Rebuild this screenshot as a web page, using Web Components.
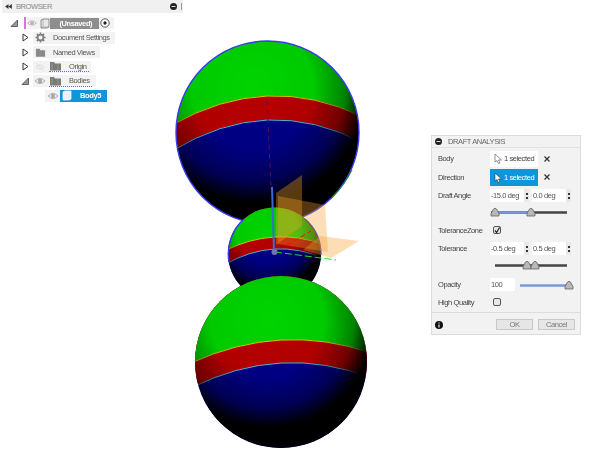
<!DOCTYPE html>
<html>
<head>
<meta charset="utf-8">
<title>Draft Analysis</title>
<style>
html, body { margin: 0; height: 100%; background: #fff; overflow: hidden; }
body { font-family: "Liberation Sans", Arial, sans-serif; }
</style>
</head>
<body>
<cad-app>
  <model-view></model-view>
  <browser-panel slot="browser">
    <tree-row arrow="open" indent="7" leadw="10" pink chipw="73">
      <svg slot="lead" width="10" height="10" viewBox="0 0 14 14"><circle cx="7" cy="7" r="2.600" fill="#b5b5b5"/><path d="M1 7q6-6 12 0q-6 6-12 0z" fill="none" stroke="#b5b5b5" stroke-width="1.300"/></svg>
      <doc-chip>(Unsaved)</doc-chip>
      <svg slot="tail" width="10" height="10" viewBox="0 0 11 11"><circle cx="5.500" cy="5.500" r="4.600" fill="#fff" stroke="#444"/><circle cx="5.500" cy="5.500" r="1.800" fill="#222"/></svg>
    </tree-row>
    <tree-row arrow="closed" indent="18" chipw="82">
      <svg slot="lead" width="11" height="11" viewBox="0 0 12 12"><circle cx="6" cy="6" r="3.200" fill="none" stroke="#808080" stroke-width="2"/><path d="M6 .5v2.400M6 9.100v2.400M.5 6h2.400M9.100 6h2.400M2.100 2.100l1.700 1.700M8.200 8.200l1.700 1.700M9.900 2.100L8.200 3.800M3.800 8.200L2.100 9.900" stroke="#808080" stroke-width="1.800"/></svg>
      <span class="gap">Document Settings</span>
    </tree-row>
    <tree-row arrow="closed" indent="18" chipw="67">
      <svg slot="lead" width="11" height="11" viewBox="0 0 12 12"><path d="M1 2h4l1 1.500h5V10.500H1z" fill="#8a8a8a"/></svg>
      <span class="gap">Named Views</span>
    </tree-row>
    <tree-row arrow="closed" indent="18" chipw="58">
      <svg slot="lead" width="12" height="12" viewBox="0 0 12 12"><path d="M2 6q4-4 8 0q-4 4-8 0zM2.500 2l7 8" fill="none" stroke="#ddd"/></svg>
      <folder-label>Origin</folder-label>
    </tree-row>
    <tree-row arrow="open" indent="18" chipw="63">
      <svg slot="lead" width="12" height="12" viewBox="0 0 12 12"><circle cx="6" cy="6" r="2.200" fill="#aaa"/><path d="M1 6q5-5 10 0q-5 5-10 0z" fill="none" stroke="#aaa"/></svg>
      <folder-label>Bodies</folder-label>
    </tree-row>
    <tree-row indent="30" leadw="15" chipw="15" selected>
      <svg slot="lead" width="12" height="12" viewBox="0 0 12 12"><circle cx="6" cy="6" r="2.200" fill="#aaa"/><path d="M1 6q5-5 10 0q-5 5-10 0z" fill="none" stroke="#aaa"/></svg>
      <body-chip>Body5</body-chip>
    </tree-row>
  </browser-panel>
  <draft-panel slot="panel"></draft-panel>
</cad-app>

<script>
/*
 * Page frame: the viewport fills the window, panels float above it.
 */
customElements.define('cad-app', class extends HTMLElement {
  constructor () {
    super()
    this.attachShadow({ mode: 'open' }).innerHTML = `
      <style>
        :host { display: block; position: relative; width: 600px; height: 460px; overflow: hidden; }
        ::slotted([slot=browser]) { position: absolute; left: 2px; top: 0; }
        ::slotted([slot=panel]) { position: absolute; left: 431px; top: 135px; }
      </style>
      <slot></slot>
      <slot name="browser"></slot>
      <slot name="panel"></slot>`
  }
})

/*
 * The 3D view with the three shaded spheres and the direction gizmo.
 */
const sphere = (id, cx, cy, r, yellow, blue, drop, tilt, stroke) => {
  // band edges are parabolas across the sphere, sagging at both sides
  const band = (y, d) => `M${cx - r - 4} ${y + d + tilt} Q${cx} ${y - d} ${cx + r + 4} ${y + d - tilt}`
  const up = `L${cx + r + 4} ${cy - r - 4} L${cx - r - 4} ${cy - r - 4} Z`
  return `
    <clipPath id="c${id}"><circle cx="${cx}" cy="${cy}" r="${r}"/></clipPath>
    <g clip-path="url(#c${id})">
      <rect x="${cx - r}" y="${cy - r}" width="${2 * r}" height="${2 * r}" fill="#000088"/>
      <path d="${band(blue, drop + 2)} ${up}" fill="#b80000"/>
      <path d="${band(yellow, drop)} ${up}" fill="#00d400"/>
      <path d="${band(blue, drop + 2)}" fill="none" stroke="#55b8d8" stroke-width="1"/>
      <path d="${band(yellow, drop)}" fill="none" stroke="#d8c800" stroke-width="1"/>
      <circle cx="${cx}" cy="${cy}" r="${r}" fill="url(#shade)"/>
    </g>
    ${stroke}`
}

customElements.define('model-view', class extends HTMLElement {
  constructor () {
    super()
    this.attachShadow({ mode: 'open' }).innerHTML = `
      <style>
        :host { display: block; width: 600px; height: 460px; }
        svg { display: block; }
      </style>
      <svg width="600" height="460" viewBox="0 0 600 460">
        <defs>
          <radialGradient id="shade" cx="0.42" cy="0.26" r="0.74">
            <stop offset="0" stop-color="#000" stop-opacity="0"/>
            <stop offset="0.45" stop-color="#000" stop-opacity="0.05"/>
            <stop offset="0.68" stop-color="#000" stop-opacity="0.38"/>
            <stop offset="0.84" stop-color="#000" stop-opacity="1"/>
          </radialGradient>
        </defs>
        ${sphere('a', 267.5, 132.5, 91.5, 96, 120, 25, 4, '<circle cx="267.500" cy="132.500" r="91.500" fill="none" stroke="#3a3af0" stroke-width="1.400"/><path d="M352 170A90 90 0 0 1 332 197" fill="none" stroke="#1a8a1a"/>')}
        <path d="M267 100L271 187" stroke="#5a1050" stroke-width="1" stroke-dasharray="5 4" fill="none"/>
        ${sphere('b', 274.5, 254, 46.5, 237, 249, 11, 3, '<path d="M229 262A46.500 46.500 0 0 1 244 219" fill="none" stroke="#3a3af0" stroke-width="1.400"/><path d="M305 219A46.500 46.500 0 0 1 321 255" fill="none" stroke="#2828b0" stroke-width="1.200"/>')}
        ${sphere('c', 281, 362, 86, 340, 363, 18, 5, '')}
        <g>
          <path d="M302 175L276 193V245L302 226Z" fill="#f0a020" fill-opacity=".36"/>
          <path d="M278 196L325 205L328 252L278 244Z" fill="#f5a030" fill-opacity=".34"/>
          <path d="M320 236L359 241L331 258L303 250Z" fill="#f7a030" fill-opacity=".36"/>
        </g>
        <path d="M272 187L274 252" stroke="#3a6ad8" stroke-width="2" fill="none"/>
        <path d="M287 245L311 231" stroke="#ee1010" stroke-width="1" stroke-dasharray="5 3" fill="none"/>
        <path d="M275 252L336 260" stroke="#18e018" stroke-width="1" stroke-dasharray="7 3" fill="none"/>
        <circle cx="274.500" cy="252" r="3" fill="#6a78b8"/>
      </svg>`
  }
})

/*
 * BROWSER tree panel.
 */
customElements.define('browser-panel', class extends HTMLElement {
  constructor () {
    super()
    this.attachShadow({ mode: 'open' }).innerHTML = `
      <style>
        :host { display: block; width: 181px; font-size: 7.500px; letter-spacing: -.4px; color: #555; filter: blur(.4px); }
        header { display: flex; align-items: center; height: 13px; background: #f0f0f0; padding: 0 1px 0 3px; color: #888; }
        .back { width: 11px; display: flex; }
        .title { flex: 1; }
        .bar { width: 1px; height: 7px; background: #999; margin-left: 4px; }
        .tree { display: flex; flex-direction: column; padding-top: 3px; }
      </style>
      <header>
        <span class="back"><svg width="7" height="5" viewBox="0 0 8 6"><path d="M4 0v6L0 3zM8 0v6L4 3z" fill="#333"/></svg></span>
        <span class="title">BROWSER</span>
        <svg width="7" height="7" viewBox="0 0 7 7"><circle cx="3.500" cy="3.500" r="3.500" fill="#222"/><path d="M1.500 3.500h4" stroke="#ddd"/></svg>
        <span class="bar"></span>
      </header>
      <div class="tree"><slot></slot></div>`
  }
})

customElements.define('tree-row', class extends HTMLElement {
  constructor () {
    super()
    this.attachShadow({ mode: 'open' })
  }

  connectedCallback () {
    const arrow = this.getAttribute('arrow')
    const selected = this.hasAttribute('selected')
    const pink = this.hasAttribute('pink')
    const leadw = this.getAttribute('leadw') || 14
    const open = '<svg width="8" height="8" viewBox="0 0 8 8"><path d="M7.500 1V7.500H1Z" fill="#999" stroke="#333" stroke-width=".7"/></svg>'
    const closed = '<svg width="7" height="9" viewBox="0 0 7 9"><path d="M1 1L6 4.500L1 8Z" fill="#fff" stroke="#333" stroke-width="1"/></svg>'
    const glyph = arrow === 'open' ? open : arrow === 'closed' ? closed : ''
    this.shadowRoot.innerHTML = `
      <style>
        :host { display: flex; align-items: center; height: 14.500px; padding-left: ${this.getAttribute('indent')}px; }
        .arrow { width: 10px; display: flex; justify-content: center; }
        .chip { display: flex; align-items: center; height: 12px; min-width: ${this.getAttribute('chipw')}px; margin-left: ${pink ? 1 : 3}px; background: ${selected ? 'transparent' : '#f3f3f3'}; }
        .pink { width: 1.500px; height: 12px; background: #e070d8; margin-left: 5px; }
        .lead { display: flex; width: ${leadw}px; justify-content: center; align-items: center; height: 12px; background: #f3f3f3; }
        .tail { display: flex; background: #f3f3f3; padding: 0 4px 0 1px; height: 12px; align-items: center; }
        .tail[hidden] { display: none; }
      </style>
      <span class="arrow">${glyph}</span>
      ${pink ? '<span class="pink"></span>' : ''}
      <span class="chip">
        <span class="lead"><slot name="lead"></slot></span>
        <slot></slot>
        <span class="tail" ${this.querySelector('[slot=tail]') ? '' : 'hidden'}><slot name="tail"></slot></span>
      </span>`
    // the .gap spans in the light tree position their own text
    this.querySelectorAll('.gap').forEach(el => { el.style.marginLeft = '6px' })
  }
})

customElements.define('doc-chip', class extends HTMLElement {
  constructor () {
    super()
    this.attachShadow({ mode: 'open' }).innerHTML = `
      <style>
        :host { display: flex; align-items: center; width: 59px; height: 11px; background: #8e8e8e; color: #fff; font-weight: bold; margin-left: 3px; }
        svg { margin: 0 10px 0 0; background: #f5f5f5; }
      </style>
      <svg width="10" height="11" viewBox="0 0 10 11"><path d="M1 2l2-1h6v8l-2 1H1z" fill="#e4e8ec" stroke="#666" stroke-width=".7"/><path d="M3 1v8h6M3 9l-2 1" fill="none" stroke="#888" stroke-width=".5"/></svg>
      <slot></slot>`
  }
})

customElements.define('folder-label', class extends HTMLElement {
  constructor () {
    super()
    this.attachShadow({ mode: 'open' }).innerHTML = `
      <style>
        :host { display: flex; align-items: center; height: 12px; color: #555; margin-left: 2px; }
        .line { display: flex; align-items: center; gap: 7px; border-bottom: 1px dotted #5a78b8; padding-right: 2px; }
      </style>
      <span class="line">
        <svg width="13" height="10" viewBox="0 0 13 10"><path d="M1 1h4l1 1.500h6V9.500H1z" fill="#7a7a7a"/><path d="M3 2v7M9 3v6" stroke="#aaa" stroke-width=".6"/></svg>
        <slot></slot>
      </span>`
  }
})

customElements.define('body-chip', class extends HTMLElement {
  constructor () {
    super()
    this.attachShadow({ mode: 'open' }).innerHTML = `
      <style>
        :host { display: flex; align-items: center; width: 47px; height: 12px; background: #0e96d8; color: #fff; font-weight: bold; }
        svg { margin: 0 8px 0 2px; }
      </style>
      <svg width="10" height="11" viewBox="0 0 10 11"><path d="M1 2l2-1h6v8l-2 1H1z" fill="#eef2f6" stroke="#fff" stroke-width=".7"/></svg>
      <slot></slot>`
  }
})

/*
 * DRAFT ANALYSIS dialog.
 */
customElements.define('draft-panel', class extends HTMLElement {
  constructor () {
    super()
    this.attachShadow({ mode: 'open' }).innerHTML = `
      <style>
        :host { display: block; box-sizing: border-box; width: 150px; height: 200px; background: #f2f2f2; border: 1px solid #dcdcdc; font-size: 7.500px; letter-spacing: -.4px; color: #444; filter: blur(.4px); }
        header { display: flex; align-items: center; gap: 6px; height: 11px; padding-left: 3px; color: #666; border-bottom: 1px solid #e2e2e2; }
        .rows { display: flex; flex-direction: column; padding-top: 1px; height: 164px; box-sizing: border-box; }
        footer { display: flex; align-items: center; height: 23px; padding: 0 5px 0 3px; border-top: 1px solid #dcdcdc; gap: 5px; }
        .info { flex: 1; display: flex; }
        .btn { display: flex; align-items: center; justify-content: center; width: 35px; height: 9px; background: #e6e6e6; border: 1px solid #c8c8c8; color: #777; }
        .closer { margin-left: 5px; }
        .sel { display: flex; align-items: center; gap: 2px; width: 48px; height: 16px; background: #fff; padding-left: 4px; box-sizing: border-box; white-space: nowrap; }
        .sel.on { background: #0e96d8; color: #fff; height: 17px; }
        .plain { display: flex; align-items: center; height: 13px; width: 25px; background: #fff; padding-left: 1px; box-sizing: border-box; color: #555; }
      </style>
      <header>
        <svg width="7" height="7" viewBox="0 0 7 7"><circle cx="3.500" cy="3.500" r="3.500" fill="#222"/><path d="M1.500 3.500h4" stroke="#ddd"/></svg>
        <span>DRAFT ANALYSIS</span>
      </header>
      <div class="rows">
        <form-row label="Body" height="19">
          <span class="sel"><svg width="8" height="11" viewBox="0 0 8 11"><path d="M1 1V9L3 7.500L4.500 10.500L6 10L4.500 7H7.500Z" fill="#fff" stroke="#777" stroke-width=".8"/></svg>1 selected</span>
          <svg class="closer" width="8" height="8" viewBox="0 0 8 8"><path d="M1.500 1.500L6.500 6.500M6.500 1.500L1.500 6.500" stroke="#333" stroke-width="1.200"/></svg>
        </form-row>
        <form-row label="Direction" height="18">
          <span class="sel on"><svg width="8" height="11" viewBox="0 0 8 11"><path d="M1 1V9L3 7.500L4.500 10.500L6 10L4.500 7H7.500Z" fill="#fff" stroke="#333" stroke-width=".6"/></svg>1 selected</span>
          <svg class="closer" width="8" height="8" viewBox="0 0 8 8"><path d="M1.500 1.500L6.500 6.500M6.500 1.500L1.500 6.500" stroke="#333" stroke-width="1.200"/></svg>
        </form-row>
        <form-row label="Draft Angle" height="19">
          <spin-input value="-15.0 deg"></spin-input>
          <spin-input value="0.0 deg"></spin-input>
        </form-row>
        <form-row height="13"><range-track a="4" b="40" width="76" left="1" trackblue></range-track></form-row>
        <form-row label="ToleranceZone" height="24">
          <tick-box checked></tick-box>
        </form-row>
        <form-row label="Tolerance" height="13">
          <spin-input value="-0.5 deg"></spin-input>
          <spin-input value="0.5 deg"></spin-input>
        </form-row>
        <form-row height="18"><range-track a="32" b="40" width="72" left="5"></range-track></form-row>
        <form-row label="Opacity" height="22">
          <span class="plain">100</span>
          <range-track a="49" width="51" left="5" single></range-track>
        </form-row>
        <form-row label="High Quality" height="14">
          <tick-box></tick-box>
        </form-row>
      </div>
      <footer>
        <span class="info"><svg width="8" height="8" viewBox="0 0 8 8"><circle cx="4" cy="4" r="4" fill="#111"/><path d="M4 1.500v1M4 3.500v3" stroke="#fff" stroke-width="1.100"/></svg></span>
        <span class="btn">OK</span>
        <span class="btn">Cancel</span>
      </footer>`
  }
})

customElements.define('form-row', class extends HTMLElement {
  constructor () {
    super()
    this.attachShadow({ mode: 'open' })
  }

  connectedCallback () {
    this.shadowRoot.innerHTML = `
      <style>
        :host { display: grid; grid-template-columns: 52px 1fr; align-items: center; height: ${this.getAttribute('height')}px; padding-left: 6px; }
        .field { display: flex; align-items: center; }
      </style>
      <span>${this.getAttribute('label') || ''}</span>
      <span class="field"><slot></slot></span>`
  }
})

customElements.define('spin-input', class extends HTMLElement {
  constructor () {
    super()
    this.attachShadow({ mode: 'open' })
  }

  connectedCallback () {
    this.shadowRoot.innerHTML = `
      <style>
        :host { display: flex; align-items: center; width: 42px; height: 13px; color: #555; }
        .val { display: flex; align-items: center; width: 34px; height: 13px; background: #fff; padding-left: 1px; box-sizing: border-box; white-space: nowrap; overflow: hidden; }
        .spin { display: flex; flex-direction: column; justify-content: center; gap: 2px; width: 5px; height: 13px; background: #e8e8e8; align-items: center; }
        i { display: block; width: 2px; height: 2px; background: #333; }
      </style>
      <span class="val">${this.getAttribute('value')}</span>
      <span class="spin"><i></i><i></i></span>`
  }
})

customElements.define('tick-box', class extends HTMLElement {
  constructor () {
    super()
    this.attachShadow({ mode: 'open' })
  }

  connectedCallback () {
    const tick = this.hasAttribute('checked') ? '<path d="M2 4.500L3.700 6.500L6.500 1.500" fill="none" stroke="#222" stroke-width="1.200"/>' : ''
    this.shadowRoot.innerHTML = `
      <style>:host { display: flex; margin-left: 3px; }</style>
      <svg width="8" height="8" viewBox="0 0 8 8"><rect x=".5" y=".5" width="7" height="7" rx="1.500" fill="#e8e8e8" stroke="#555"/>${tick}</svg>`
  }
})

customElements.define('range-track', class extends HTMLElement {
  constructor () {
    super()
    this.attachShadow({ mode: 'open' })
  }

  connectedCallback () {
    const w = Number(this.getAttribute('width'))
    const a = Number(this.getAttribute('a'))
    const b = this.getAttribute('b') === null ? null : Number(this.getAttribute('b'))
    const thumb = x => `<path d="M${x - 4} 10V7.500L${x - 1.500} 3Q${x} 1.500 ${x + 1.500} 3L${x + 4} 7.500V10Z" fill="#b8b8b8" stroke="#555" stroke-width=".7"/>`
    let line
    if (this.hasAttribute('single')) {
      line = `<path d="M0 6.500H${a}" stroke="#7898d8" stroke-width="2.500"/>`
    } else if (this.hasAttribute('trackblue')) {
      line = `<path d="M0 6.500H${w}" stroke="#444" stroke-width="2.500"/><path d="M${a} 6.500H${b}" stroke="#7898d8" stroke-width="2.500"/>`
    } else {
      line = `<path d="M0 6.500H${w}" stroke="#444" stroke-width="2.500"/>`
    }
    this.shadowRoot.innerHTML = `
      <style>:host { display: flex; margin-left: ${this.getAttribute('left')}px; } svg { display: block; overflow: visible; }</style>
      <svg width="${w}" height="11" viewBox="0 0 ${w} 11">${line}${thumb(a)}${b === null ? '' : thumb(b)}</svg>`
  }
})
</script>
</body>
</html>
